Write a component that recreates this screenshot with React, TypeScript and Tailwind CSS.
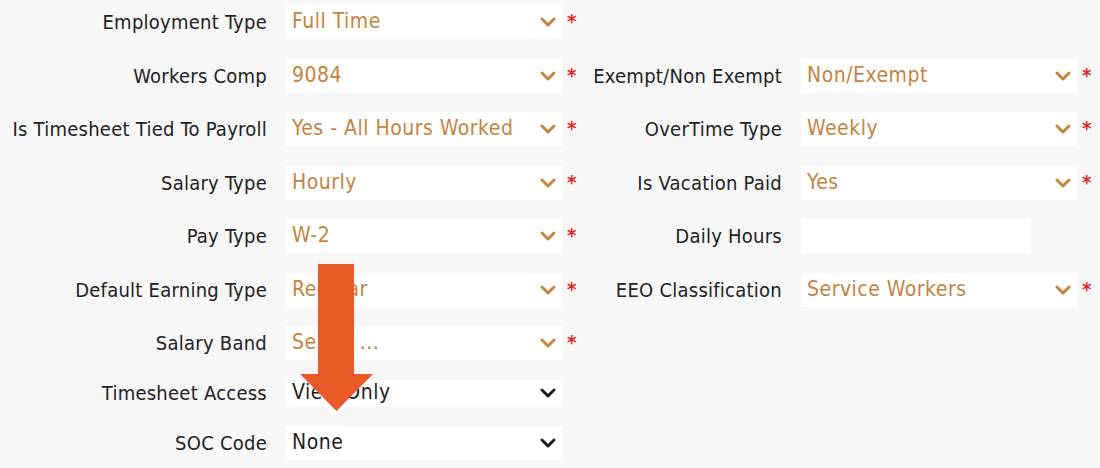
import React from "react";

const ORANGE = "#c8823e";

function Chevron({ dark }: { dark?: boolean }) {
  return (
    <svg width="16" height="10" viewBox="0 0 16 10" className="shrink-0">
      <polyline
        points="2,2 8,8 14,2"
        fill="none"
        stroke={dark ? "#1e1e1e" : ORANGE}
        strokeWidth="3"
        strokeLinecap="round"
        strokeLinejoin="round"
      />
    </svg>
  );
}

function Star() {
  return (
    <span className="self-start mt-[6px] ml-[5px] text-[20px] leading-none font-bold text-[#e32626] w-[12px]">
      *
    </span>
  );
}

function Select({
  value,
  dark,
  short,
}: {
  value: string;
  dark?: boolean;
  short?: boolean;
}) {
  return (
    <div
      className={`w-[276px] ${short ? "h-[27px]" : "h-[34px]"} bg-white flex items-center justify-between pl-[6px] pr-[6px] ${
        dark ? "text-[#1e1e1e]" : "text-[#c8823e]"
      }`}
    >
      <span className="whitespace-nowrap text-[21px] tracking-[0.5px]">{value}</span>
      <Chevron dark={dark} />
    </div>
  );
}

type Field = { label: string; value?: string; req?: boolean; dark?: boolean; input?: boolean; short?: boolean };

const rows: { left: Field; right?: Field }[] = [
  { left: { label: "Employment Type", value: "Full Time", req: true } },
  {
    left: { label: "Workers Comp", value: "9084", req: true },
    right: { label: "Exempt/Non Exempt", value: "Non/Exempt", req: true },
  },
  {
    left: { label: "Is Timesheet Tied To Payroll", value: "Yes - All Hours Worked", req: true },
    right: { label: "OverTime Type", value: "Weekly", req: true },
  },
  {
    left: { label: "Salary Type", value: "Hourly", req: true },
    right: { label: "Is Vacation Paid", value: "Yes", req: true },
  },
  {
    left: { label: "Pay Type", value: "W-2", req: true },
    right: { label: "Daily Hours", input: true },
  },
  {
    left: { label: "Default Earning Type", value: "Regular", req: true },
    right: { label: "EEO Classification", value: "Service Workers", req: true },
  },
  { left: { label: "Salary Band", value: "Select ...", req: true } },
  { left: { label: "Timesheet Access", value: "View Only", dark: true, short: true } },
  { left: { label: "SOC Code", value: "None", dark: true } },
];

function FieldCell({ f, labelW }: { f: Field; labelW: string }) {
  return (
    <div className="flex items-center h-full">
      <div className={`${labelW} text-right text-[#222222] whitespace-nowrap tracking-[0.25px]`}>{f.label}</div>
      <div className="ml-[19px] flex items-center h-full">
        {f.input ? (
          <div className="w-[230px] h-[36px] bg-white" />
        ) : (
          <Select value={f.value || ""} dark={f.dark} short={f.short} />
        )}
        {f.req ? <Star /> : <span className="w-[17px]" />}
      </div>
    </div>
  );
}

export default function App() {
  return (
    <div
      className="relative w-[1100px] h-[468px] bg-[#f7f7f7] overflow-hidden text-[20px]"
      style={{ fontFamily: '"DejaVu Sans Condensed", "DejaVu Sans", sans-serif' }}
    >
      <div className="flex flex-col gap-[19.5px] pt-[5px]">
        {rows.map((r, i) => (
          <div key={i} className={`flex items-center ${r.left.short ? "h-[27px]" : "h-[34px]"}`}>
            <FieldCell f={r.left} labelW="w-[267px]" />
            {r.right && (
              <div className="h-full">
                <FieldCell f={r.right} labelW="w-[203px]" />
              </div>
            )}
          </div>
        ))}
      </div>
      <svg
        className="absolute left-[300px] top-[264px]"
        width="74"
        height="148"
        viewBox="0 0 74 148"
      >
        <polygon points="18,0 54,0 54,110 73,110 36.5,147 0,110 18,110" fill="#ea5a29" />
      </svg>
    </div>
  );
}
